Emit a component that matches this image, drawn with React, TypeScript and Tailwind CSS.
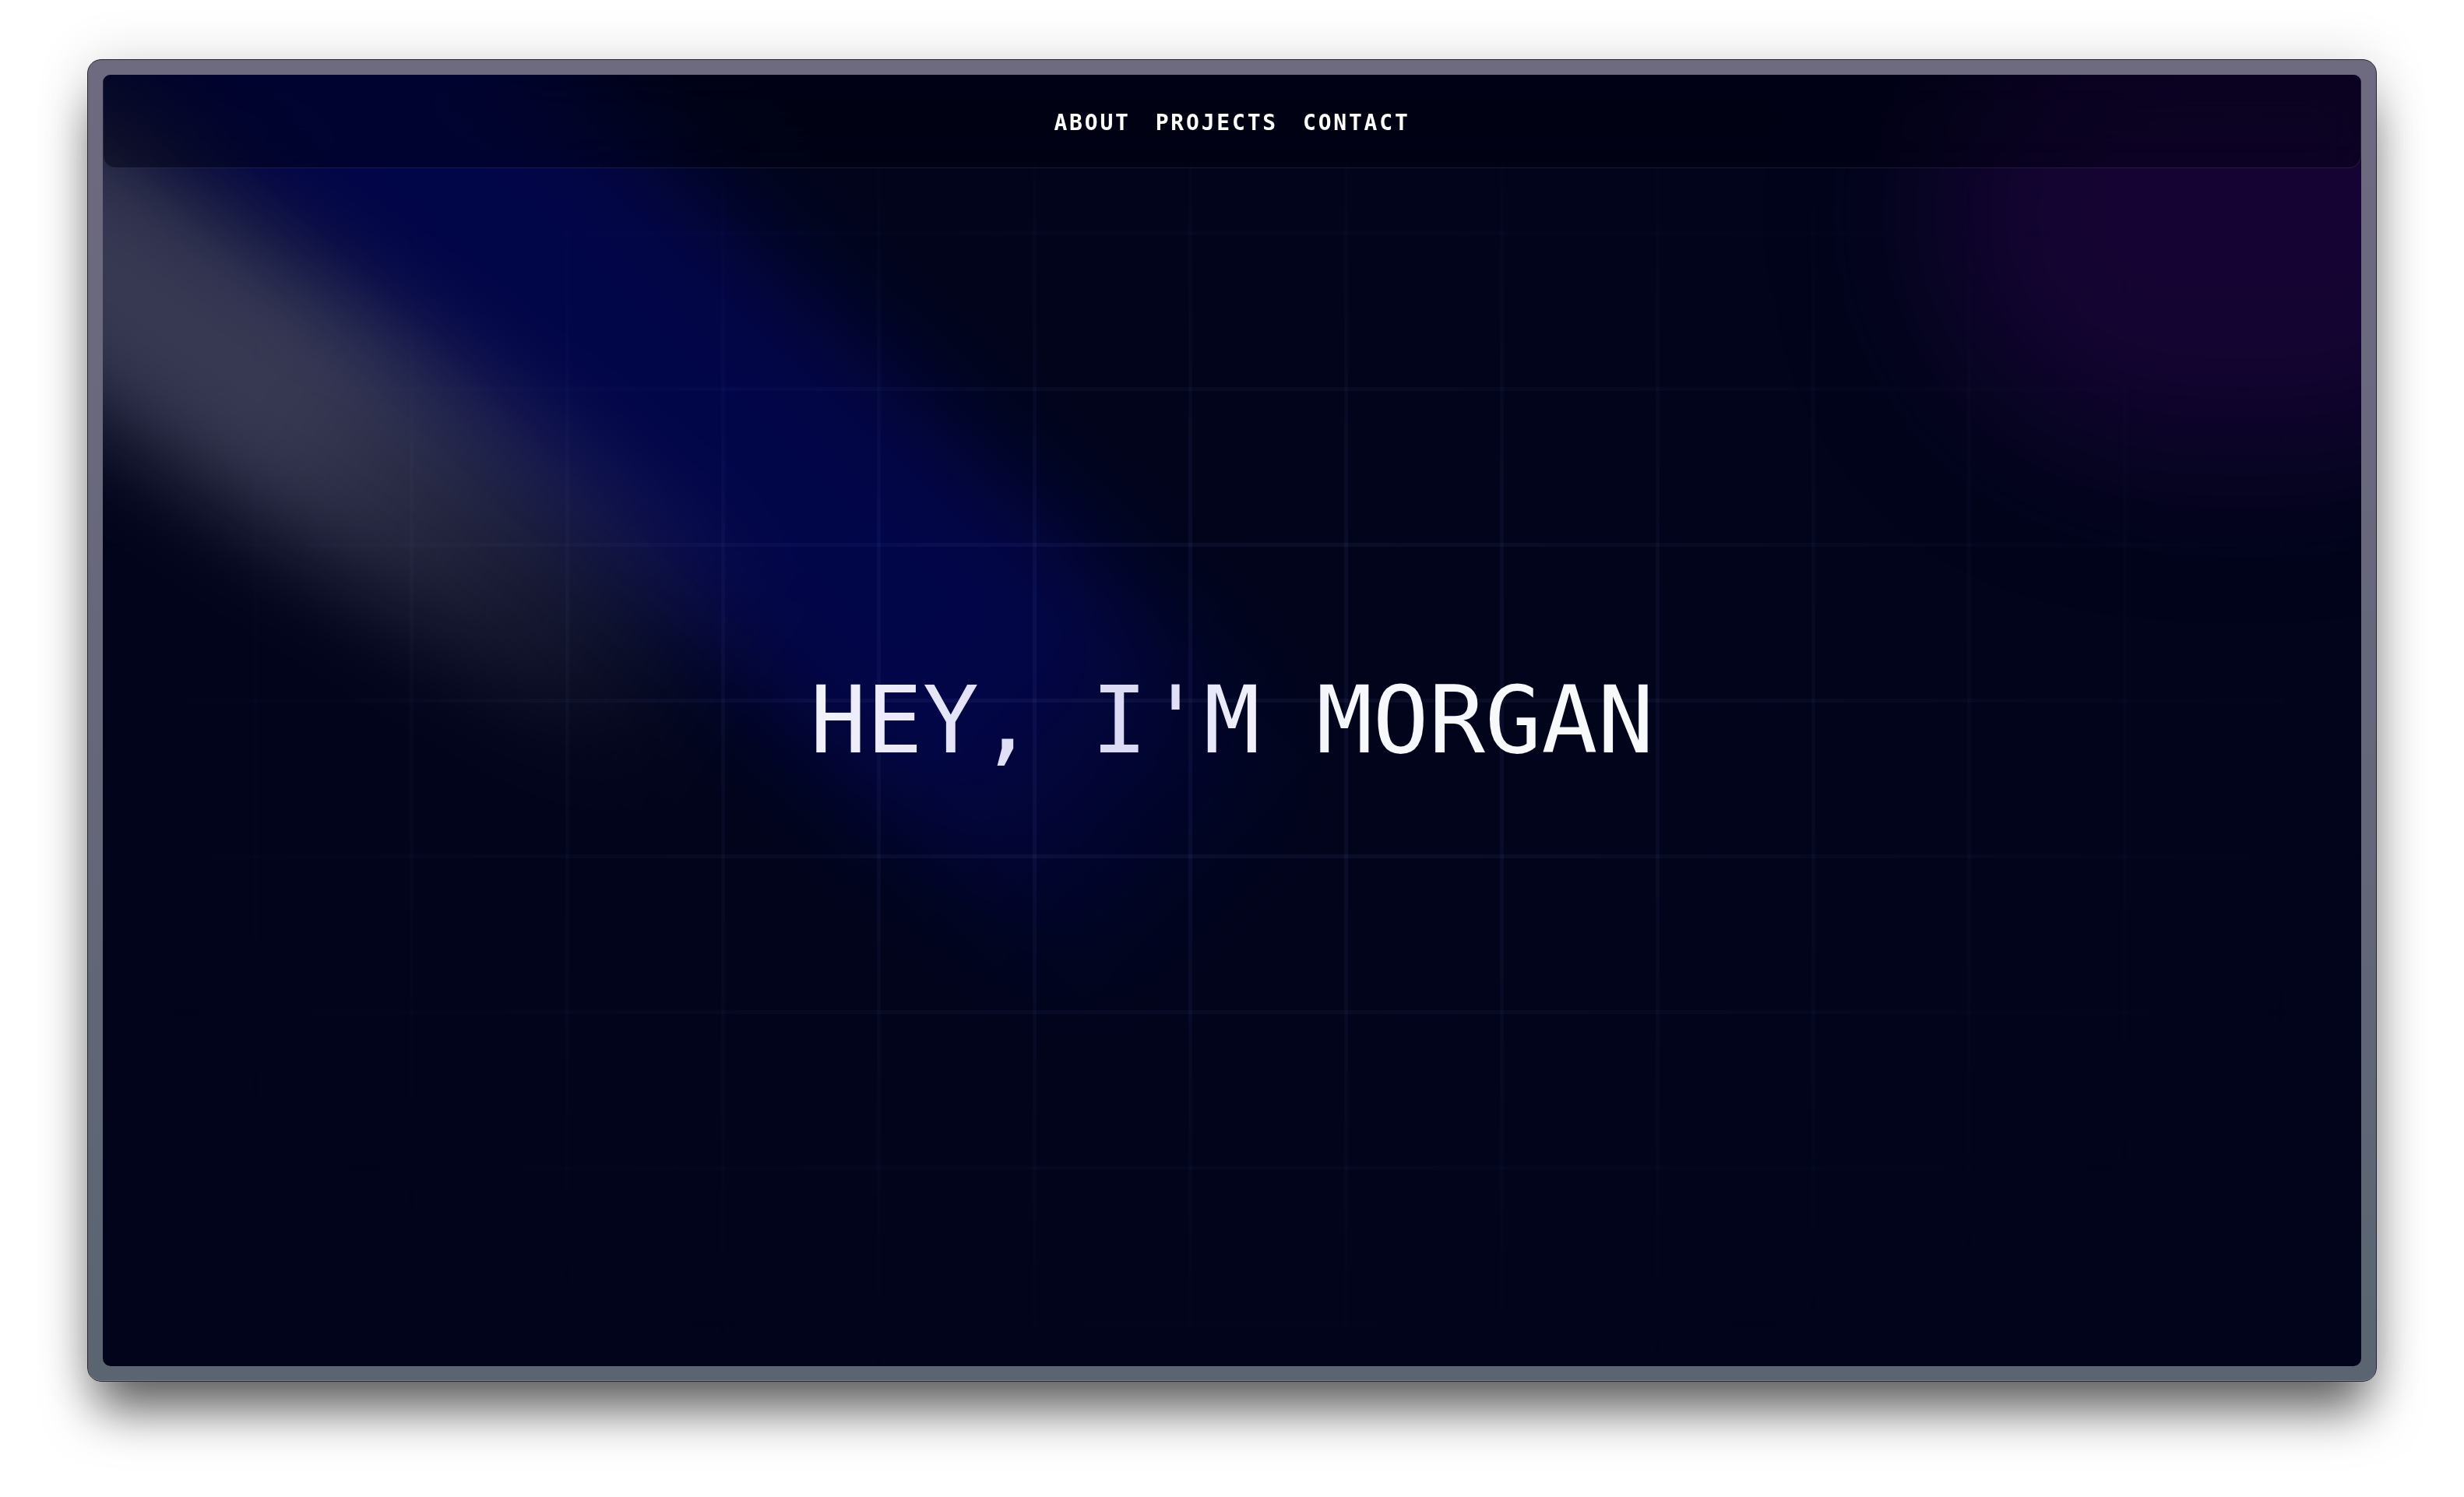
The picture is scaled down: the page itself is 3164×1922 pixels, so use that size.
const mono = "font-['DejaVu_Sans_Mono','Liberation_Mono',monospace]";

const links = ["ABOUT", "PROJECTS", "CONTACT"];

export default function App() {
  return (
    <div className="min-h-screen bg-white px-[112px] pt-[76px] pb-[148px]">
      <div className="h-[1698px] rounded-[18px] border border-[#26262e] bg-[linear-gradient(180deg,#6e6a80_0%,#66677a_50%,#5a6571_100%)] p-[19px] shadow-[0_0_70px_rgba(0,0,0,0.14),0_48px_64px_-12px_rgba(0,0,0,0.6),inset_0_-1px_0_rgba(255,255,255,0.18)]">
        <div className="relative h-full overflow-hidden rounded-[10px] bg-[#01041a]">
          {/* light beams, decorative */}
          <div className="pointer-events-none absolute left-[-80px] top-[-561px] h-[420px] w-[2120px] origin-left rotate-[43deg] bg-[linear-gradient(90deg,rgba(2,8,120,0.5)_0%,rgba(2,8,120,0.5)_78%,rgba(2,8,120,0)_98%)] blur-[70px]" />
          <div className="pointer-events-none absolute left-[-249px] top-[-60px] h-[300px] w-[1350px] origin-left rotate-[34deg] bg-[linear-gradient(90deg,rgba(150,150,182,0.36)_0%,rgba(150,150,182,0.36)_45%,rgba(150,150,182,0)_92%)] blur-[60px]" />
          <div className="pointer-events-none absolute right-[-250px] top-[-120px] h-[600px] w-[800px] rounded-full bg-[rgba(50,5,85,0.42)] blur-[100px]" />

          {/* grid */}
          <div className="pointer-events-none absolute inset-0 bg-[linear-gradient(to_right,rgba(130,140,220,0.07)_5px,transparent_5px),linear-gradient(to_bottom,rgba(130,140,220,0.07)_5px,transparent_5px)] [background-size:200px_200px] [background-position:-6px_1px] [mask-image:radial-gradient(ellipse_53%_54%_at_50%_50%,#000_25%,transparent_100%)]" />

          <main className="relative z-10 flex h-full items-center justify-center">
            <h1
              className={`${mono} bg-[linear-gradient(90deg,#f2f2fb_0%,#dedef7_25%,#dadaf5_40%,#eff0f9_52%,#f7f8fb_65%,#f8f9fb_100%)] bg-clip-text text-[120px] font-normal leading-none text-transparent`}
            >
              HEY, I'M MORGAN
            </h1>
          </main>

          <nav className="absolute inset-x-0 top-0 z-20 flex h-[120px] items-center justify-center gap-8 rounded-b-[16px] border border-t-0 border-white/10 bg-[#00000c]/40 pt-1 backdrop-blur-[30px]">
            {links.map((l) => (
              <a
                key={l}
                href="#"
                className={`${mono} text-[28px] font-bold leading-none tracking-[0.1em] text-white`}
              >
                {l}
              </a>
            ))}
          </nav>
        </div>
      </div>
    </div>
  );
}
